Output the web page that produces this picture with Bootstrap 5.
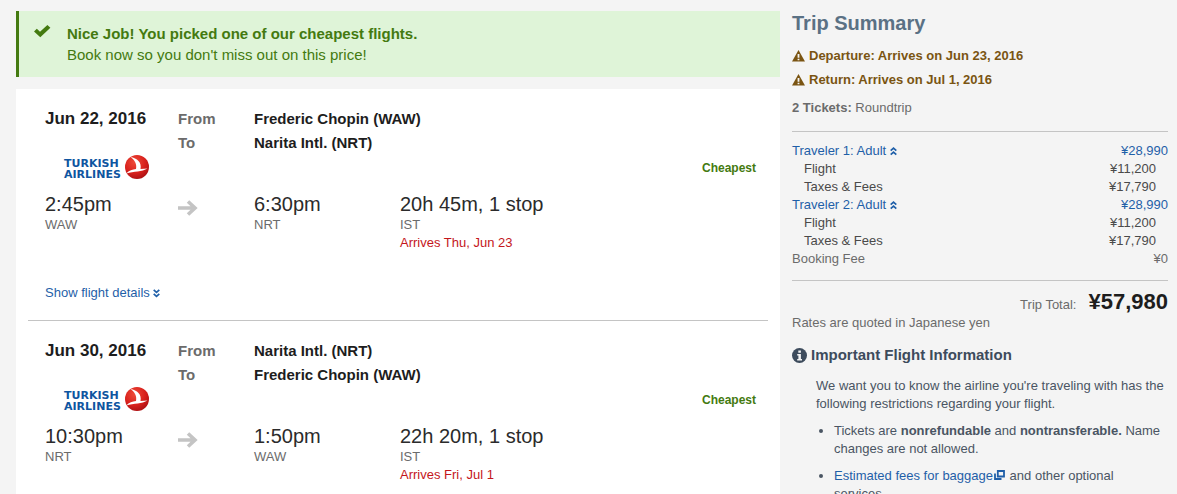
<!DOCTYPE html>
<html lang="en">
<head>
<meta charset="utf-8">
<meta name="viewport" content="width=device-width, initial-scale=1">
<title>Trip Summary</title>
<link href="https://cdn.jsdelivr.net/npm/bootstrap@5.3.0/dist/css/bootstrap.min.css" rel="stylesheet">
<style>
  body { background: #f4f4f4; color: #1d1d1d; font: 13px/18px "Liberation Sans", Arial, sans-serif; }
  a { color: #1f5fa8; text-decoration: none; }
  a:hover { text-decoration: underline; }
  h1, h2, h3, p, ul { margin: 0; }
  .page { display: grid; grid-template-columns: minmax(0, 764fr) minmax(0, 376fr); gap: 12px; padding: 11px 9px 0 16px; align-items: start; }
  .deal { background: #dff4d8; border-left: 3px solid #447a10; color: #447a10; padding: 12px 16px 12px 15px; gap: 16px; margin-bottom: 12px; font-size: 15px; line-height: 21px; }
  .legs { background: #fff; padding: 0 12px; }
  .leg { padding: 18px 12px 18px 17px; border-bottom: 1px solid #c4c4c4; }
  .leg-grid { display: grid; grid-template-columns: 133fr 76fr 146fr 356fr; }
  .leg-date { font-size: 17px; font-weight: 700; line-height: 24px; }
  .route { font-size: 15px; font-weight: 700; line-height: 24px; }
  .route-ends { grid-column: span 2; }
  .muted-text { color: #6b6b6b; }
  .brand-row { height: 25px; margin-bottom: 12px; padding-left: 18px; }
  .brand-row svg { overflow: visible; }
  .brand-row text { font: 700 11px "DejaVu Sans", sans-serif; fill: #0f55a0; }
  .cheapest { color: #447a10; font-size: 12px; font-weight: 700; }
  .time { font-size: 20px; line-height: 24px; color: #2b2b2b; }
  .late { color: #c4161c; }
  .details { margin-top: 32px; }
  .side-title { font-size: 20px; font-weight: 700; line-height: 24px; color: #5a7184; margin-bottom: 9px; }
  .notice { color: #7a5412; font-weight: 700; line-height: 24px; gap: 4px; }
  .tickets { margin-top: 7px; padding-bottom: 14px; border-bottom: 1px solid #c4c4c4; }
  .fares { width: 100%; margin: 10px 0 12px; color: #4a4a4a; }
  .fares th { font-weight: 400; padding: 0; }
  .fares td { text-align: right; padding: 0; }
  .fares .sub th { padding-left: 12px; }
  .fares .sub td { padding-right: 12px; }
  .total { border-top: 1px solid #c4c4c4; padding-top: 9px; gap: 12px; }
  .total strong { font-size: 22px; line-height: 24px; color: #1d1d1d; }
  .info-title { font-size: 15px; font-weight: 700; line-height: 18px; color: #3d4b5c; margin: 14px 0 13px; gap: 4px; }
  .info { color: #4a5563; padding: 0 3px 0 24px; }
  .info ul { margin-top: 9px; padding-left: 18px; }
  .info li { margin-bottom: 9px; }
  .popup-icon { margin: 0 1px; vertical-align: baseline; }
</style>
</head>
<body>
<svg class="position-absolute" width="0" height="0" aria-hidden="true">
  <defs>
    <radialGradient id="red" cx=".4" cy=".3" r=".75"><stop offset="0" stop-color="#ee4a38"/><stop offset=".6" stop-color="#d8201c"/><stop offset="1" stop-color="#a80f12"/></radialGradient>
  </defs>
  <symbol id="arrow" viewBox="0 0 20 18"><path d="M0 8H17M10 1.500l7 6.500-7 6.500" fill="none" stroke="#c4c4c4" stroke-width="3.600"/></symbol>
  <symbol id="down" viewBox="0 0 7 9"><path d="M.7.800 3.500 3.300 6.300.800M.7 4.800 3.500 7.300 6.300 4.800" fill="none" stroke="currentColor" stroke-width="1.700"/></symbol>
  <symbol id="up" viewBox="0 0 7 9"><path d="M.7 3.700 3.500 1.200 6.300 3.700M.7 7.700 3.500 5.200 6.300 7.700" fill="none" stroke="currentColor" stroke-width="1.700"/></symbol>
  <symbol id="warn" viewBox="0 0 13 12"><path d="M6.500 0 13 11.500H0Z" fill="currentColor"/><path d="M5.600 4h1.800v3.800H5.600zM5.600 8.700h1.800v1.600H5.600z" fill="#f4f4f4"/></symbol>
  <symbol id="turkish" viewBox="0 0 24 24">
    <circle cx="12" cy="12" r="12" fill="url(#red)"/>
    <path d="M5.500 2C12 3 17 7.500 15.500 14L22.500 13.500C17 17 9 16 1.200 18.500C4 15.500 7.500 14.600 11 14C12 9.500 10 5 5.500 2Z" fill="#fff"/>
  </symbol>
</svg>
<div class="page">
  <main>
    <div class="deal d-flex" role="status">
      <svg class="flex-shrink-0" width="17" height="16" viewBox="0 0 17 16" aria-hidden="true"><path d="M0 8.500 2.800 5.800 6 8.800 13.400 2 16.400 4.800 6.300 14.300Z" fill="#447a10"/></svg>
      <div><strong>Nice Job! You picked one of our cheapest flights.</strong><br>Book now so you don't miss out on this price!</div>
    </div>
    <div class="legs">
      <section class="leg">
        <div class="leg-grid">
          <h2 class="leg-date">Jun 22, 2016</h2>
          <div class="route muted-text">From<br>To</div>
          <div class="route route-ends">Frederic Chopin (WAW)<br>Narita Intl. (NRT)</div>
        </div>
        <div class="brand-row d-flex align-items-center justify-content-between">
          <svg width="88" height="25" viewBox="0 0 88 25" role="img" aria-label="Turkish Airlines">
            <text x="1" y="12">TURKISH</text><text x="1" y="23">AIRLINES</text>
            <use href="#turkish" x="62" width="24" height="24"/>
          </svg>
          <span class="cheapest">Cheapest</span>
        </div>
        <div class="leg-grid">
          <div><div class="time">2:45pm</div><div class="muted-text">WAW</div></div>
          <div class="pt-1"><svg class="mt-1" width="20" height="18" aria-hidden="true"><use href="#arrow"/></svg></div>
          <div><div class="time">6:30pm</div><div class="muted-text">NRT</div></div>
          <div><div class="time">20h 45m, 1 stop</div><div class="muted-text">IST</div><div class="late">Arrives Thu, Jun 23</div></div>
        </div>
        <div class="details"><a href="#">Show flight details <svg width="7" height="9" aria-hidden="true"><use href="#down"/></svg></a></div>
      </section>
      <section class="leg">
        <div class="leg-grid">
          <h2 class="leg-date">Jun 30, 2016</h2>
          <div class="route muted-text">From<br>To</div>
          <div class="route route-ends">Narita Intl. (NRT)<br>Frederic Chopin (WAW)</div>
        </div>
        <div class="brand-row d-flex align-items-center justify-content-between">
          <svg width="88" height="25" viewBox="0 0 88 25" role="img" aria-label="Turkish Airlines">
            <text x="1" y="12">TURKISH</text><text x="1" y="23">AIRLINES</text>
            <use href="#turkish" x="62" width="24" height="24"/>
          </svg>
          <span class="cheapest">Cheapest</span>
        </div>
        <div class="leg-grid">
          <div><div class="time">10:30pm</div><div class="muted-text">NRT</div></div>
          <div class="pt-1"><svg class="mt-1" width="20" height="18" aria-hidden="true"><use href="#arrow"/></svg></div>
          <div><div class="time">1:50pm</div><div class="muted-text">WAW</div></div>
          <div><div class="time">22h 20m, 1 stop</div><div class="muted-text">IST</div><div class="late">Arrives Fri, Jul 1</div></div>
        </div>
      </section>
    </div>
  </main>
  <aside>
    <h1 class="side-title">Trip Summary</h1>
    <p class="notice d-flex align-items-center"><svg width="13" height="12" aria-hidden="true"><use href="#warn"/></svg>Departure: Arrives on Jun 23, 2016</p>
    <p class="notice d-flex align-items-center"><svg width="13" height="12" aria-hidden="true"><use href="#warn"/></svg>Return: Arrives on Jul 1, 2016</p>
    <p class="tickets muted-text"><strong>2 Tickets:</strong> Roundtrip</p>
    <table class="fares">
      <tbody>
        <tr><th scope="row"><a href="#">Traveler 1: Adult <svg width="7" height="9" aria-hidden="true"><use href="#up"/></svg></a></th><td><a href="#">¥28,990</a></td></tr>
        <tr class="sub"><th scope="row">Flight</th><td>¥11,200</td></tr>
        <tr class="sub"><th scope="row">Taxes &amp; Fees</th><td>¥17,790</td></tr>
        <tr><th scope="row"><a href="#">Traveler 2: Adult <svg width="7" height="9" aria-hidden="true"><use href="#up"/></svg></a></th><td><a href="#">¥28,990</a></td></tr>
        <tr class="sub"><th scope="row">Flight</th><td>¥11,200</td></tr>
        <tr class="sub"><th scope="row">Taxes &amp; Fees</th><td>¥17,790</td></tr>
        <tr class="muted-text"><th scope="row">Booking Fee</th><td>¥0</td></tr>
      </tbody>
    </table>
    <div class="total muted-text d-flex justify-content-end align-items-baseline">Trip Total: <strong>¥57,980</strong></div>
    <p class="muted-text">Rates are quoted in Japanese yen</p>
    <h2 class="info-title d-flex align-items-center"><svg width="15" height="15" viewBox="0 0 15 15" aria-hidden="true"><circle cx="7.500" cy="7.500" r="7.500" fill="#3d4b5c"/><path d="M6.300 2.500h2.600v2.200H6.300zM5.200 6h3.700v5H10v1.600H5.200V11h1.200V7.500H5.200z" fill="#f4f4f4"/></svg>Important Flight Information</h2>
    <div class="info">
      <p>We want you to know the airline you're traveling with has the following restrictions regarding your flight.</p>
      <ul>
        <li>Tickets are <strong>nonrefundable</strong> and <strong>nontransferable.</strong> Name changes are not allowed.</li>
        <li><a href="#">Estimated fees for baggage<svg class="popup-icon" width="11" height="10" viewBox="0 0 11 10" aria-hidden="true"><path d="M3.800 1H10v5.500H3.800zM1 3.500V9h6.500" fill="none" stroke="currentColor" stroke-width="1.800"/></svg></a> and other optional services.</li>
      </ul>
    </div>
  </aside>
</div>
<script src="https://cdn.jsdelivr.net/npm/bootstrap@5.3.0/dist/js/bootstrap.bundle.min.js"></script>
</body>
</html>
